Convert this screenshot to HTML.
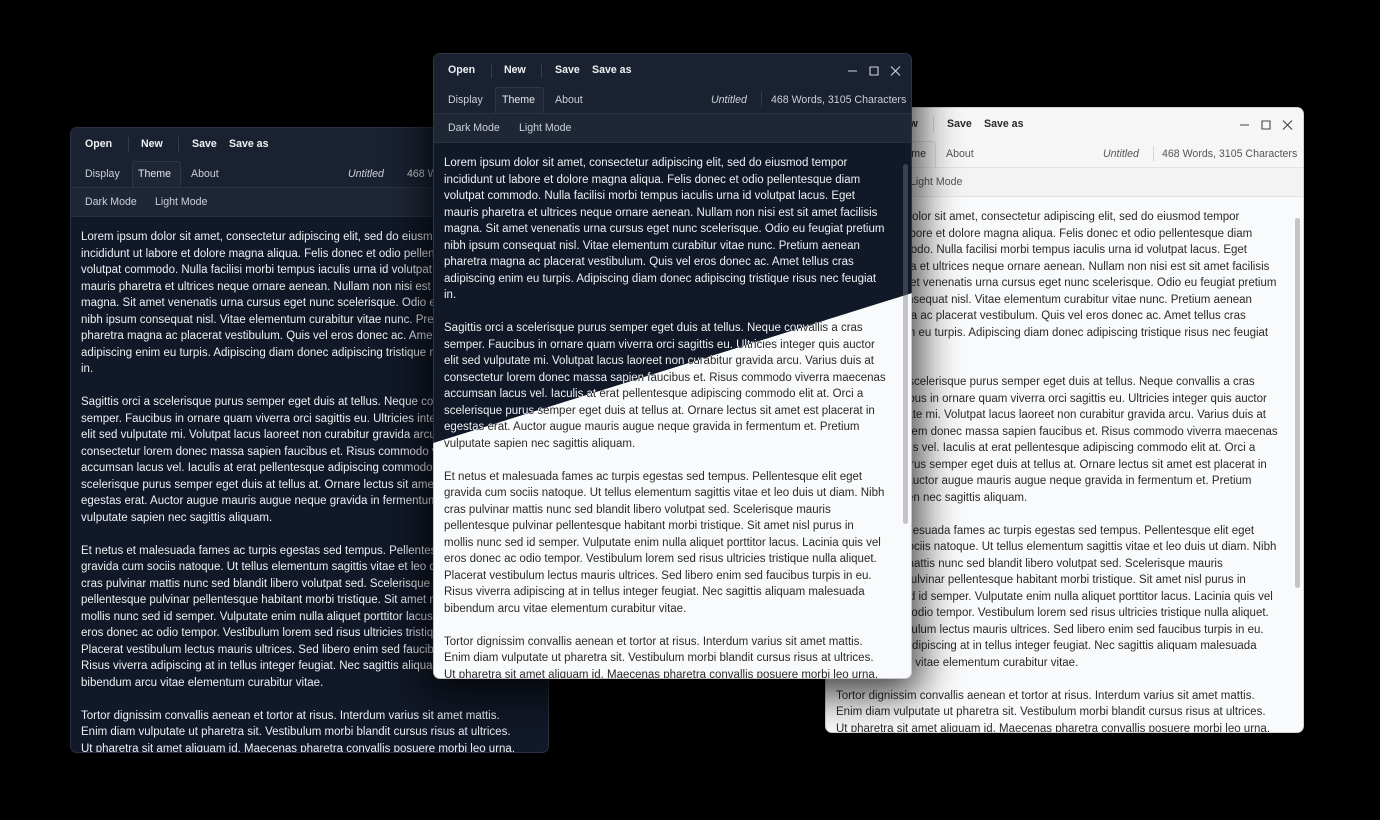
<!DOCTYPE html>
<html><head><meta charset="utf-8"><style>
*{margin:0;padding:0;box-sizing:border-box}
body{width:1380px;height:820px;background:#000;position:relative;overflow:hidden;font-family:"Segoe UI","Liberation Sans",sans-serif}
.win{position:absolute;width:479px;height:626px;border-radius:7px;overflow:hidden;font-size:10.6px}
.win .a{position:absolute;white-space:nowrap}
.tb{position:absolute;left:0;top:0;width:100%;height:32px}
.tabs{position:absolute;left:0;top:32px;width:100%;height:27px}
.rib{position:absolute;left:0;top:59px;width:100%;height:30px}
.txt{position:absolute;left:0;top:89px;width:100%;bottom:0;padding:12px 0 0 10px;line-height:16.5px;font-size:11.5px;white-space:pre;overflow:hidden}
.sb{position:absolute;right:2px;top:96px;width:8px;bottom:0}
.sb i{position:absolute;left:2px;top:14px;width:5px;height:360px;border-radius:3px}
.b{font-weight:bold;top:10px}
.sep{position:absolute;top:9px;width:1px;height:15px}
.tab{position:absolute;top:1px;height:27px;border:1px solid;border-bottom:none;border-radius:3px 3px 0 0}
.dark{background:#111827;color:#eef0f3}
.dark .tb,.dark .tabs{background:#1a2130}
.dark .rib{background:#1f2736;border-top:1px solid #2a3242;border-bottom:1px solid #2a3242}
.dark .tab{background:#1f2736;border-color:#2e3648}
.dark .sep{background:#343c4c}
.dark .sb i{background:#3a4150}
.dark .tabs .a,.dark .rib .a{color:#cbd0d8}
.light{background:#f9fafb;color:#2a2a2a}
.light .tb,.light .tabs{background:#f6f6f7}
.light .rib{background:#f3f3f4;border-top:1px solid #e3e3e5;border-bottom:1px solid #e3e3e5}
.light .tab{background:#f3f3f4;border-color:#dcdcdf}
.light .sep{background:#d5d5d8}
.light .sb i{background:#c4c4c6}
.light .tabs .a,.light .rib .a{color:#555}
.ic{position:absolute;top:10px}
</style></head><body>

<!-- LEFT DARK -->
<div class="win dark" style="left:70px;top:127px;border:1px solid #2a3140">
<div class="tb"><span class="a b" style="left:14px">Open</span><span class="sep" style="left:57px"></span><span class="a b" style="left:70px">New</span><span class="sep" style="left:107px"></span><span class="a b" style="left:121px">Save</span><span class="a b" style="left:158px">Save as</span></div>
<div class="tabs"><span class="tab" style="left:61px;width:49px"></span><span class="a" style="left:14px;top:8px">Display</span><span class="a" style="left:67px;top:8px;color:#e5e7eb">Theme</span><span class="a" style="left:120px;top:8px">About</span><span class="a" style="left:277px;top:8px;font-style:italic">Untitled</span><span class="a" style="left:336px;top:8px">468 Words, 3105 Characters</span></div>
<div class="rib"><span class="a" style="left:14px;top:8px">Dark Mode</span><span class="a" style="left:84px;top:8px">Light Mode</span></div>
<div class="txt">Lorem ipsum dolor sit amet, consectetur adipiscing elit, sed do eiusmod tempor
incididunt ut labore et dolore magna aliqua. Felis donec et odio pellentesque diam
volutpat commodo. Nulla facilisi morbi tempus iaculis urna id volutpat lacus. Eget
mauris pharetra et ultrices neque ornare aenean. Nullam non nisi est sit amet facilisis
magna. Sit amet venenatis urna cursus eget nunc scelerisque. Odio eu feugiat pretium
nibh ipsum consequat nisl. Vitae elementum curabitur vitae nunc. Pretium aenean
pharetra magna ac placerat vestibulum. Quis vel eros donec ac. Amet tellus cras
adipiscing enim eu turpis. Adipiscing diam donec adipiscing tristique risus nec feugiat
in.

Sagittis orci a scelerisque purus semper eget duis at tellus. Neque convallis a cras
semper. Faucibus in ornare quam viverra orci sagittis eu. Ultricies integer quis auctor
elit sed vulputate mi. Volutpat lacus laoreet non curabitur gravida arcu. Varius duis at
consectetur lorem donec massa sapien faucibus et. Risus commodo viverra maecenas
accumsan lacus vel. Iaculis at erat pellentesque adipiscing commodo elit at. Orci a
scelerisque purus semper eget duis at tellus at. Ornare lectus sit amet est placerat in
egestas erat. Auctor augue mauris augue neque gravida in fermentum et. Pretium
vulputate sapien nec sagittis aliquam.

Et netus et malesuada fames ac turpis egestas sed tempus. Pellentesque elit eget
gravida cum sociis natoque. Ut tellus elementum sagittis vitae et leo duis ut diam. Nibh
cras pulvinar mattis nunc sed blandit libero volutpat sed. Scelerisque mauris
pellentesque pulvinar pellentesque habitant morbi tristique. Sit amet nisl purus in
mollis nunc sed id semper. Vulputate enim nulla aliquet porttitor lacus. Lacinia quis vel
eros donec ac odio tempor. Vestibulum lorem sed risus ultricies tristique nulla aliquet.
Placerat vestibulum lectus mauris ultrices. Sed libero enim sed faucibus turpis in eu.
Risus viverra adipiscing at in tellus integer feugiat. Nec sagittis aliquam malesuada
bibendum arcu vitae elementum curabitur vitae.

Tortor dignissim convallis aenean et tortor at risus. Interdum varius sit amet mattis.
Enim diam vulputate ut pharetra sit. Vestibulum morbi blandit cursus risus at ultrices.
Ut pharetra sit amet aliquam id. Maecenas pharetra convallis posuere morbi leo urna.</div>
</div>

<!-- RIGHT LIGHT -->
<div class="win light" style="left:825px;top:107px;border:1px solid #d0d0d3">
<div class="tb"><span class="a b" style="left:14px">Open</span><span class="sep" style="left:57px"></span><span class="a b" style="left:70px">New</span><span class="sep" style="left:107px"></span><span class="a b" style="left:121px">Save</span><span class="a b" style="left:158px">Save as</span>
<svg class="ic" style="left:412px" width="60" height="14" viewBox="0 0 60 14" fill="none" stroke="#444" stroke-width="1.1"><path d="M2 7h9"/><path d="M24 3h8v8h-8z"/><path d="M45 2.5l9 9M54 2.5l-9 9"/></svg></div>
<div class="tabs"><span class="tab" style="left:61px;width:49px"></span><span class="a" style="left:14px;top:8px">Display</span><span class="a" style="left:67px;top:8px;color:#333">Theme</span><span class="a" style="left:120px;top:8px">About</span><span class="a" style="left:277px;top:8px;font-style:italic">Untitled</span><span class="sep" style="left:327px;top:6px"></span><span class="a" style="left:336px;top:8px">468 Words, 3105 Characters</span></div>
<div class="rib"><span class="a" style="left:14px;top:8px">Dark Mode</span><span class="a" style="left:84px;top:8px">Light Mode</span></div>
<div class="txt">Lorem ipsum dolor sit amet, consectetur adipiscing elit, sed do eiusmod tempor
incididunt ut labore et dolore magna aliqua. Felis donec et odio pellentesque diam
volutpat commodo. Nulla facilisi morbi tempus iaculis urna id volutpat lacus. Eget
mauris pharetra et ultrices neque ornare aenean. Nullam non nisi est sit amet facilisis
magna. Sit amet venenatis urna cursus eget nunc scelerisque. Odio eu feugiat pretium
nibh ipsum consequat nisl. Vitae elementum curabitur vitae nunc. Pretium aenean
pharetra magna ac placerat vestibulum. Quis vel eros donec ac. Amet tellus cras
adipiscing enim eu turpis. Adipiscing diam donec adipiscing tristique risus nec feugiat
in.

Sagittis orci a scelerisque purus semper eget duis at tellus. Neque convallis a cras
semper. Faucibus in ornare quam viverra orci sagittis eu. Ultricies integer quis auctor
elit sed vulputate mi. Volutpat lacus laoreet non curabitur gravida arcu. Varius duis at
consectetur lorem donec massa sapien faucibus et. Risus commodo viverra maecenas
accumsan lacus vel. Iaculis at erat pellentesque adipiscing commodo elit at. Orci a
scelerisque purus semper eget duis at tellus at. Ornare lectus sit amet est placerat in
egestas erat. Auctor augue mauris augue neque gravida in fermentum et. Pretium
vulputate sapien nec sagittis aliquam.

Et netus et malesuada fames ac turpis egestas sed tempus. Pellentesque elit eget
gravida cum sociis natoque. Ut tellus elementum sagittis vitae et leo duis ut diam. Nibh
cras pulvinar mattis nunc sed blandit libero volutpat sed. Scelerisque mauris
pellentesque pulvinar pellentesque habitant morbi tristique. Sit amet nisl purus in
mollis nunc sed id semper. Vulputate enim nulla aliquet porttitor lacus. Lacinia quis vel
eros donec ac odio tempor. Vestibulum lorem sed risus ultricies tristique nulla aliquet.
Placerat vestibulum lectus mauris ultrices. Sed libero enim sed faucibus turpis in eu.
Risus viverra adipiscing at in tellus integer feugiat. Nec sagittis aliquam malesuada
bibendum arcu vitae elementum curabitur vitae.

Tortor dignissim convallis aenean et tortor at risus. Interdum varius sit amet mattis.
Enim diam vulputate ut pharetra sit. Vestibulum morbi blandit cursus risus at ultrices.
Ut pharetra sit amet aliquam id. Maecenas pharetra convallis posuere morbi leo urna.</div>
<div class="sb"><i style="height:370px"></i></div>
</div>

<!-- MIDDLE shadow -->
<div style="position:absolute;left:433px;top:53px;width:479px;height:626px;border-radius:7px;box-shadow:0 8px 40px 8px rgba(0,0,0,.75)"></div>

<!-- MIDDLE LIGHT (bottom part) -->
<div class="win light" style="left:433px;top:53px;border:1px solid #c8c8cc;clip-path:polygon(0 390px,100% 240px,100% 100%,0 100%)">
<div class="tb"></div><div class="tabs"></div><div class="rib"></div>
<div class="txt">Lorem ipsum dolor sit amet, consectetur adipiscing elit, sed do eiusmod tempor
incididunt ut labore et dolore magna aliqua. Felis donec et odio pellentesque diam
volutpat commodo. Nulla facilisi morbi tempus iaculis urna id volutpat lacus. Eget
mauris pharetra et ultrices neque ornare aenean. Nullam non nisi est sit amet facilisis
magna. Sit amet venenatis urna cursus eget nunc scelerisque. Odio eu feugiat pretium
nibh ipsum consequat nisl. Vitae elementum curabitur vitae nunc. Pretium aenean
pharetra magna ac placerat vestibulum. Quis vel eros donec ac. Amet tellus cras
adipiscing enim eu turpis. Adipiscing diam donec adipiscing tristique risus nec feugiat
in.

Sagittis orci a scelerisque purus semper eget duis at tellus. Neque convallis a cras
semper. Faucibus in ornare quam viverra orci sagittis eu. Ultricies integer quis auctor
elit sed vulputate mi. Volutpat lacus laoreet non curabitur gravida arcu. Varius duis at
consectetur lorem donec massa sapien faucibus et. Risus commodo viverra maecenas
accumsan lacus vel. Iaculis at erat pellentesque adipiscing commodo elit at. Orci a
scelerisque purus semper eget duis at tellus at. Ornare lectus sit amet est placerat in
egestas erat. Auctor augue mauris augue neque gravida in fermentum et. Pretium
vulputate sapien nec sagittis aliquam.

Et netus et malesuada fames ac turpis egestas sed tempus. Pellentesque elit eget
gravida cum sociis natoque. Ut tellus elementum sagittis vitae et leo duis ut diam. Nibh
cras pulvinar mattis nunc sed blandit libero volutpat sed. Scelerisque mauris
pellentesque pulvinar pellentesque habitant morbi tristique. Sit amet nisl purus in
mollis nunc sed id semper. Vulputate enim nulla aliquet porttitor lacus. Lacinia quis vel
eros donec ac odio tempor. Vestibulum lorem sed risus ultricies tristique nulla aliquet.
Placerat vestibulum lectus mauris ultrices. Sed libero enim sed faucibus turpis in eu.
Risus viverra adipiscing at in tellus integer feugiat. Nec sagittis aliquam malesuada
bibendum arcu vitae elementum curabitur vitae.

Tortor dignissim convallis aenean et tortor at risus. Interdum varius sit amet mattis.
Enim diam vulputate ut pharetra sit. Vestibulum morbi blandit cursus risus at ultrices.
Ut pharetra sit amet aliquam id. Maecenas pharetra convallis posuere morbi leo urna.</div>
<div class="sb"><i></i></div>
</div>

<!-- MIDDLE DARK (top part) -->
<div class="win dark" style="left:433px;top:53px;border:1px solid #2f3646;clip-path:polygon(0 0,100% 0,100% 240px,0 390px)">
<div class="tb"><span class="a b" style="left:14px">Open</span><span class="sep" style="left:57px"></span><span class="a b" style="left:70px">New</span><span class="sep" style="left:107px"></span><span class="a b" style="left:121px">Save</span><span class="a b" style="left:158px">Save as</span>
<svg class="ic" style="left:412px" width="60" height="14" viewBox="0 0 60 14" fill="none" stroke="#d0d4dc" stroke-width="1.1"><path d="M2 7h9"/><path d="M24 3h8v8h-8z"/><path d="M45 2.5l9 9M54 2.5l-9 9"/></svg></div>
<div class="tabs"><span class="tab" style="left:61px;width:49px"></span><span class="a" style="left:14px;top:8px">Display</span><span class="a" style="left:68px;top:8px;color:#e5e7eb">Theme</span><span class="a" style="left:121px;top:8px">About</span><span class="a" style="left:277px;top:8px;font-style:italic">Untitled</span><span class="sep" style="left:327px;top:6px"></span><span class="a" style="left:337px;top:8px">468 Words, 3105 Characters</span></div>
<div class="rib"><span class="a" style="left:14px;top:8px">Dark Mode</span><span class="a" style="left:85px;top:8px">Light Mode</span></div>
<div class="txt">Lorem ipsum dolor sit amet, consectetur adipiscing elit, sed do eiusmod tempor
incididunt ut labore et dolore magna aliqua. Felis donec et odio pellentesque diam
volutpat commodo. Nulla facilisi morbi tempus iaculis urna id volutpat lacus. Eget
mauris pharetra et ultrices neque ornare aenean. Nullam non nisi est sit amet facilisis
magna. Sit amet venenatis urna cursus eget nunc scelerisque. Odio eu feugiat pretium
nibh ipsum consequat nisl. Vitae elementum curabitur vitae nunc. Pretium aenean
pharetra magna ac placerat vestibulum. Quis vel eros donec ac. Amet tellus cras
adipiscing enim eu turpis. Adipiscing diam donec adipiscing tristique risus nec feugiat
in.

Sagittis orci a scelerisque purus semper eget duis at tellus. Neque convallis a cras
semper. Faucibus in ornare quam viverra orci sagittis eu. Ultricies integer quis auctor
elit sed vulputate mi. Volutpat lacus laoreet non curabitur gravida arcu. Varius duis at
consectetur lorem donec massa sapien faucibus et. Risus commodo viverra maecenas
accumsan lacus vel. Iaculis at erat pellentesque adipiscing commodo elit at. Orci a
scelerisque purus semper eget duis at tellus at. Ornare lectus sit amet est placerat in
egestas erat. Auctor augue mauris augue neque gravida in fermentum et. Pretium
vulputate sapien nec sagittis aliquam.</div>
<div class="sb"><i></i></div>
</div>

</body></html>
